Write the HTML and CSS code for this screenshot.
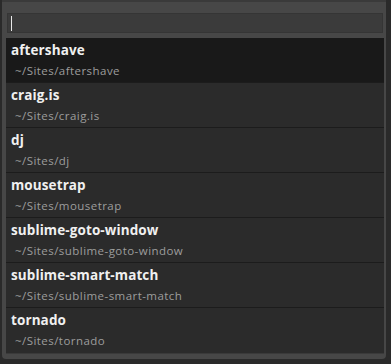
FILE: index.html
```html
<!DOCTYPE html>
<html>
<head>
<meta charset="utf-8">
<link rel="stylesheet" href="styles.css">
</head>
<body>
<div class="panel">
  <div class="search"><span class="caret"></span></div>
  <ul class="list">
    <li class="item selected"><div class="title">aftershave</div><div class="path">~/Sites/aftershave</div></li>
    <li class="item"><div class="title">craig.is</div><div class="path">~/Sites/craig.is</div></li>
    <li class="item"><div class="title">dj</div><div class="path">~/Sites/dj</div></li>
    <li class="item"><div class="title">mousetrap</div><div class="path">~/Sites/mousetrap</div></li>
    <li class="item"><div class="title">sublime-goto-window</div><div class="path">~/Sites/sublime-goto-window</div></li>
    <li class="item"><div class="title">sublime-smart-match</div><div class="path">~/Sites/sublime-smart-match</div></li>
    <li class="item"><div class="title">tornado</div><div class="path">~/Sites/tornado</div></li>
  </ul>
</div>
</body>
</html>
```
FILE: styles.css
```css
html, body {
  margin: 0;
  padding: 0;
  background: #2a2a2a;
  width: 391px;
  height: 364px;
  overflow: hidden;
}
body {
  padding: 0 5px 0 2px;
  box-sizing: border-box;
}
.panel {
  background: #474747;
  height: 359px;
  box-sizing: border-box;
  border-top: 2px solid #3a3a3a;
  border-radius: 0 0 4px 4px;
  padding: 11px 2px 5px 4px;
  display: flex;
  flex-direction: column;
}
.search {
  height: 22px;
  margin: 0 1px 5px 1px;
  background: #3b3b3b;
  border: 1px solid #353535;
  box-sizing: border-box;
  display: flex;
  align-items: center;
  padding-left: 3px;
}
.caret {
  width: 1px;
  height: 15px;
  background: #e8e8e8;
}
.list {
  list-style: none;
  margin: 0;
  padding: 0;
  background: #2b2b2b;
  border-bottom: 1px solid #3a3a3a;
}
.item {
  height: 45px;
  box-sizing: border-box;
  border-bottom: 1px solid #1c1c1c;
  padding: 3px 0 0 5px;
  font-family: "Open Sans", "DejaVu Sans", sans-serif;
}
.item:last-child { border-bottom: none; }
.item.selected { background: #191919; }
.title {
  font-weight: bold;
  font-size: 13.5px;
  color: #f0f0f0;
  line-height: 19px;
  letter-spacing: 0.1px;
}
.path {
  font-size: 11.5px;
  color: #9d9d9d;
  line-height: 18px;
  margin-top: 2px;
  padding-left: 4px;
  letter-spacing: 0.45px;
}
```
